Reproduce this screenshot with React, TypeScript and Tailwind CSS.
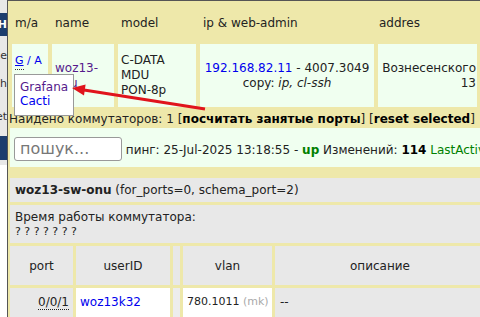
import React from "react";

// narrow strip of the side menu that peeks in from the left
const SideStrip = () => (
  <div className="w-[8px] shrink-0 h-full border-r border-[#555] bg-[#e8e8e8] flex flex-col overflow-hidden text-[11px] leading-none">
    <div className="h-[13px] shrink-0" />
    <div className="h-[23px] shrink-0 bg-[#1c3d6e] text-white font-bold flex items-center justify-end whitespace-nowrap">
      ТОН
    </div>
    <div className="h-[8px] shrink-0" />
    <div className="h-[22px] shrink-0 flex items-center justify-end whitespace-nowrap text-[#333]">Device</div>
    <div className="h-[6px] shrink-0" />
    <div className="h-[22px] shrink-0 flex items-center justify-end whitespace-nowrap text-[#333]">Switch</div>
    <div className="h-[11px] shrink-0" />
    <div className="h-[22px] shrink-0 flex items-center justify-end whitespace-nowrap text-[#333]">Internet</div>
    <div className="h-[9px] shrink-0" />
    <div className="h-[24px] shrink-0 bg-[#1c3d6e]" />
    <div className="h-[5px] shrink-0" />
    <div className="flex-1 bg-white" />
  </div>
);

const SwitchList = () => (
  <table className="border-separate border-spacing-[4px] table-fixed w-[577px]">
    <thead>
      <tr className="h-[35px] text-left">
        <th className="w-[36px] px-[3px] font-normal">m/a</th>
        <th className="w-[62px] px-[3px] font-normal">name</th>
        <th className="w-[78px] px-[3px] font-normal">model</th>
        <th className="w-[174px] px-[3px] font-normal">ip &amp; web-admin</th>
        <th className="w-[99px] px-px font-normal">addres</th>
        <th className="w-[100px] px-[3px] font-normal"></th>
      </tr>
    </thead>
    <tbody>
      <tr className="h-[63px] leading-[15px]">
        <td className="bg-[#f0fff0] px-[3px] align-middle">
          <div className="text-[11px] leading-[14px] text-[#0000ee]">
            <span className="underline">G</span> / A
          </div>
          <div className="h-[14px] w-[9px] border-t border-dotted border-[#333] mt-px" />
          <div className="h-[14px]" />
        </td>
        <td className="bg-[#f0fff0] px-[3px] text-[#551a8b]">
          woz13-
          <br />
          onu
        </td>
        <td className="bg-[#f0fff0] px-[3px]">
          C-DATA
          <br />
          MDU
          <br />
          PON-8p
        </td>
        <td className="bg-[#f0fff0] px-0 text-center whitespace-nowrap">
          <span className="text-[#0000ee]">192.168.82.11</span> - 4007.3049
          <br />
          copy: <i>ip, cl-ssh</i>
        </td>
        <td className="bg-[#f0fff0] pr-px text-right whitespace-nowrap">
          Вознесенского
          <br />
          13
        </td>
        <td className="bg-[#f0fff0]"></td>
      </tr>
    </tbody>
  </table>
);

const SwitchDetails = () => (
  <table className="-ml-px border-separate border-spacing-[3px] table-fixed w-[481px]">
    <colgroup>
      <col className="w-[63px]" />
      <col className="w-[94px]" />
      <col className="w-[7px]" />
      <col className="w-[89px]" />
      <col className="w-[210px]" />
    </colgroup>
    <tbody>
      <tr className="h-[24px]">
        <td colSpan={5} className="bg-[#e8e8e8] px-[5px] whitespace-nowrap">
          <b>woz13-sw-onu</b> (for_ports=0, schema_port=2)
        </td>
      </tr>
      <tr className="h-[38px]">
        <td colSpan={5} className="bg-[#e8e8e8] px-[5px] leading-[14px]">
          Время работы коммутатора:
          <br />
          <span className="text-[11px]">? ? ? ? ? ? ?</span>
        </td>
      </tr>
      <tr className="h-[39px] text-center">
        <td className="bg-[#e8e8e8]">port</td>
        <td className="bg-[#e8e8e8]">userID</td>
        <td className="bg-[#e8e8e8]"></td>
        <td className="bg-[#e8e8e8]">vlan</td>
        <td className="bg-[#e8e8e8]">описание</td>
      </tr>
      <tr className="h-[34px] leading-[14px]">
        <td className="bg-[#e8e8e8] align-top pt-[7px] pr-[4px] text-right">
          <span className="border-b border-dotted border-[#222]">0/0/1</span>
        </td>
        <td className="bg-white align-top pt-[7px] px-[4px] text-[#0000ee]">woz13k32</td>
        <td className="bg-[#ededed]"></td>
        <td className="bg-white align-top pt-[7px] px-[4px] whitespace-nowrap text-[11px]">
          780.1011 <span className="text-[#aaa]">(mk)</span>
        </td>
        <td className="bg-[#e8e8e8] align-top pt-[7px] px-[5px]">--</td>
      </tr>
    </tbody>
  </table>
);

export default function App() {
  return (
    <div className="relative w-[480px] h-[317px] overflow-hidden flex bg-[#eee8aa] font-['DejaVu_Sans',Verdana,sans-serif] text-[12px] text-[#222]">
      <SideStrip />
      <div className="flex-1 min-w-0 h-full border-t border-[#555] overflow-hidden">
        <SwitchList />

        <div className="pl-px h-[16px] leading-[16px] whitespace-nowrap">
          Найдено коммутаторов: 1 [<b className="text-black">посчитать занятые порты</b>] [
          <b className="text-black">reset selected</b>]
        </div>

        <div className="mt-px ml-[2px] h-[39px] bg-[#f0fff0] pt-[9px] pl-[4px] whitespace-nowrap">
          <input
            placeholder="пошук..."
            className="w-[108px] h-[24px] border border-[#999] rounded-[3px] px-[5px] text-[16px] bg-white placeholder:text-[#777] align-baseline"
          />{" "}
          пинг: 25-Jul-2025 13:18:55 - <b className="text-[#008000]">up</b> Изменений: <b className="text-black">114</b>{" "}
          <span className="text-[#008000]">LastActivity</span>
        </div>

        <div className="h-[8px]" />
        <SwitchDetails />
      </div>

      {/* hover menu over the m/a cell */}
      <div className="absolute left-[14px] top-[74px] w-[60px] h-[42px] bg-white border border-[#999] pt-[5px] px-[5px] leading-[14px]">
        <div className="text-[#551a8b]">Grafana</div>
        <div className="text-[#0000ee]">Cacti</div>
      </div>

      {/* red annotation arrow */}
      <svg className="absolute left-0 top-0 pointer-events-none" width="480" height="317">
        <line x1="205" y1="109" x2="84" y2="90" stroke="#e0141c" strokeWidth="3" />
        <polygon points="72,88 85.6,84.6 84.0,95.4" fill="#e0141c" />
      </svg>
    </div>
  );
}
